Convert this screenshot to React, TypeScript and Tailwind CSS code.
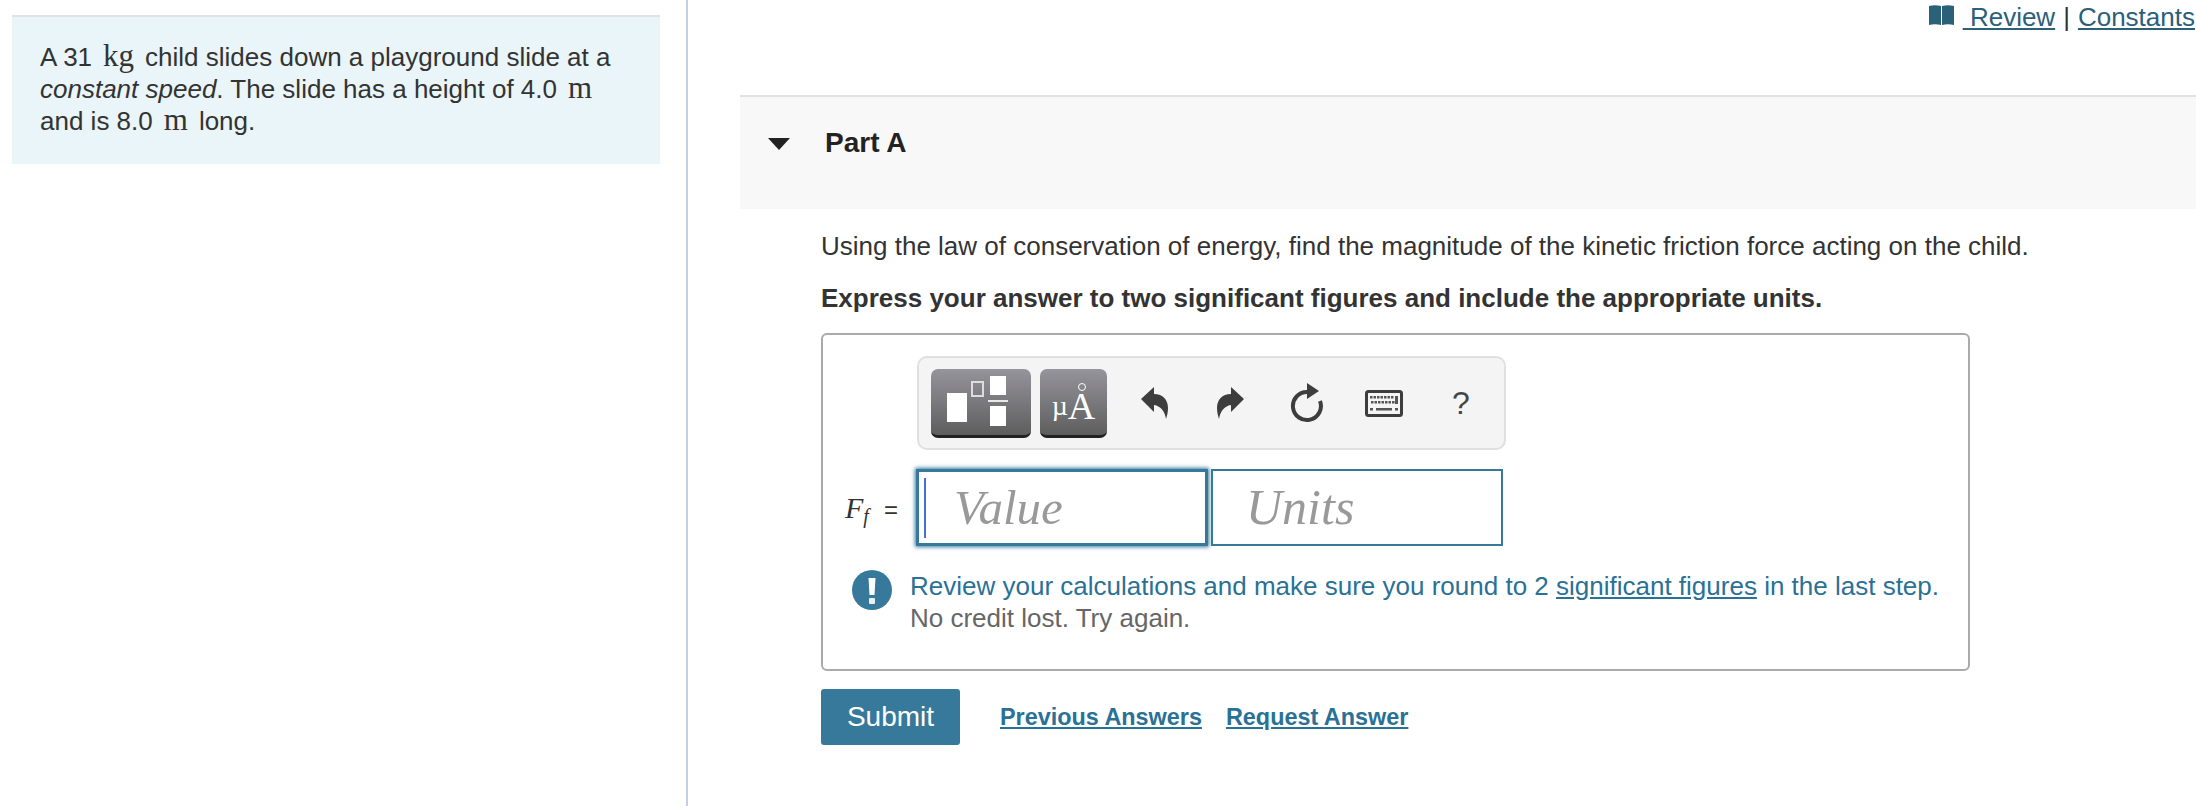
const sans = "font-['Liberation_Sans',Arial,sans-serif]";

function Unit({ children }: { children: string }) {
  return <span className="font-['Liberation_Serif',serif] text-[31px] leading-[28px] mx-[11px]">{children}</span>;
}

function BookIcon() {
  return (
    <svg width="25" height="20" viewBox="0 0 25 20" className="mr-[9px] mb-[4px]">
      <path d="M0 1 C4 0 8 0 12 1 V20 C8 19 4 19 0 20 Z M13 1 C17 0 21 0 25 1 V20 C21 19 17 19 13 20 Z" fill="#2b6079" />
    </svg>
  );
}

function TemplateIcon() {
  return (
    <svg width="72" height="58" viewBox="0 0 72 58">
      <rect x="2" y="19" width="20" height="29" fill="#fff" />
      <rect x="27" y="8" width="11" height="14" fill="none" stroke="#ddd" strokeWidth="2" />
      <rect x="45" y="2" width="16" height="19" fill="#fff" />
      <rect x="43" y="26" width="20" height="2" fill="#e8e8e8" />
      <rect x="45" y="32" width="16" height="20" fill="#fff" />
    </svg>
  );
}

function ArrowIcon({ flip }: { flip?: boolean }) {
  return (
    <svg width="28" height="36" viewBox="0 0 28 36" className={flip ? "-scale-x-100" : ""}>
      <path d="M0 14 L13 2 V9 C22 9 27 15 27 23 C27 27 26 31 25 34 C24 27 20 21 13 20 V27 Z" fill="#3d3d3d" />
    </svg>
  );
}

function ResetIcon() {
  return (
    <svg width="34" height="42" viewBox="0 0 34 42">
      <path d="M17 10 A14 14 0 1 0 30 19" fill="none" stroke="#3d3d3d" strokeWidth="4" />
      <path d="M17 1 L29 9 L17 17 Z" fill="#3d3d3d" />
    </svg>
  );
}

function KeyboardIcon() {
  const dots = [];
  for (let i = 0; i < 7; i++) dots.push(<rect key={"a" + i} x={5 + i * 3.5} y="6" width="2.5" height="2.5" fill="#555" />);
  for (let i = 0; i < 7; i++) dots.push(<rect key={"b" + i} x={6 + i * 3.5} y="11" width="2.5" height="2.5" fill="#555" />);
  return (
    <svg width="38" height="27" viewBox="0 0 38 27">
      <rect x="1.5" y="1.5" width="35" height="24" rx="2" fill="#f4f4f4" stroke="#3d3d3d" strokeWidth="3" />
      {dots}
      <rect x="30" y="6" width="3" height="8" fill="#555" />
      <rect x="5" y="18" width="3" height="2.5" fill="#555" />
      <rect x="11" y="18" width="16" height="2.5" fill="#555" />
      <rect x="30" y="18" width="3" height="2.5" fill="#555" />
    </svg>
  );
}

function AlertIcon() {
  return (
    <svg width="40" height="40" viewBox="0 0 40 40" className="shrink-0">
      <circle cx="20" cy="20" r="20" fill="#37799a" />
      <path d="M16.5 8 H23.5 L22.5 25 H17.5 Z" fill="#fff" />
      <rect x="17" y="28" width="6" height="6" rx="1" fill="#e8f0f4" />
    </svg>
  );
}

export default function App() {
  return (
    <div className={`${sans} flex w-[2196px] h-[806px] bg-white text-[#333] overflow-hidden`}>
      {/* Left: problem intro */}
      <div className="w-[688px] shrink-0 h-full border-r-2 border-[#c3d0e2] pt-[15px] pl-[12px] pr-[26px]">
        <div className="bg-[#e9f5f8] border-t-2 border-[#dfe3e6] h-[149px] pt-[24px] px-[28px] text-[26px] leading-[32px]">
          <p>
            A 31<Unit>kg</Unit>child slides down a playground slide at a
            <br />
            <em>constant speed</em>. The slide has a height of 4.0<Unit>m</Unit>
            <br />
            and is 8.0<Unit>m</Unit>long.
          </p>
        </div>
      </div>

      {/* Right: question part */}
      <div className="flex-1 min-w-0 pl-[52px]">
        <div className="h-[95px] flex justify-end items-start pt-[2px] pr-[1px] text-[26px] leading-[30px]">
          <a className="flex items-center text-[#2b6079] underline">
            <BookIcon />
            <span className="whitespace-pre"> Review</span>
          </a>
          <span className="mx-[8px]">|</span>
          <a className="text-[#2b6079] underline">Constants</a>
        </div>

        <div className="h-[114px] bg-[#f8f8f8] border-t-2 border-[#e2e2e2] flex items-start pt-[30px] pl-[28px]">
          <svg width="22" height="12" viewBox="0 0 22 12" className="mt-[11px]">
            <path d="M0 0h22L11 12z" fill="#222" />
          </svg>
          <span className="ml-[35px] text-[28px] leading-[32px] font-bold text-[#222]">Part A</span>
        </div>

        <div className="pl-[81px] pt-[21px]">
          <p className="text-[26px] leading-[32px]">
            Using the law of conservation of energy, find the magnitude of the kinetic friction force acting on the child.
          </p>
          <p className="mt-[20px] text-[26px] leading-[32px] font-bold">
            Express your answer to two significant figures and include the appropriate units.
          </p>

          <div className="mt-[19px] w-[1149px] h-[338px] border-2 border-[#aaa] rounded-[6px] pl-[94px] pt-[21px]">
            <div className="w-[589px] h-[94px] bg-[#f4f4f4] border-2 border-[#e0e0e0] rounded-[10px] flex items-center pl-[12px]">
              <div className="w-[100px] h-[69px] rounded-[7px] border-b-[3px] border-[#222] bg-gradient-to-b from-[#96949c] to-[#5e5e5e] flex items-center justify-center pt-[2px]">
                <TemplateIcon />
              </div>
              <div className="ml-[9px] w-[67px] h-[69px] rounded-[7px] border-b-[3px] border-[#222] bg-gradient-to-b from-[#96949c] to-[#5e5e5e] flex items-end justify-center pb-[9px] font-['Liberation_Serif',serif] leading-[40px] text-white">
                <span className="text-[28px]">µ</span>
                <span className="relative inline-block text-[38px]">
                  A
                  <span className="absolute -top-[3px] left-1/2 -translate-x-1/2 w-[8px] h-[8px] rounded-full border border-white" />
                </span>
              </div>
              <div className="ml-[34px]"><ArrowIcon /></div>
              <div className="ml-[47px]"><ArrowIcon flip /></div>
              <div className="ml-[46px]"><ResetIcon /></div>
              <div className="ml-[41px]"><KeyboardIcon /></div>
              <span className="ml-[49px] text-[32px] leading-[36px] text-[#444]">?</span>
            </div>

            <div className="flex items-center mt-[19px] -ml-[72px]">
              <div className="w-[71px] flex items-baseline font-['Liberation_Serif',serif] text-[30px]">
                <i>F</i>
                <i className="text-[20px] translate-y-[5px]">f</i>
                <span className={`${sans} text-[24px] ml-[15px]`}>=</span>
              </div>
              <div className="w-[292px] h-[77px] border-[3px] border-[#37799a] shadow-[0_0_4px_1px_#37799a] flex items-center pl-[5px]">
                <div className="w-[2px] h-[60px] bg-[#4a6fd0]" />
                <span className="ml-[28px] font-['Liberation_Serif',serif] italic text-[49px] text-[#999]">Value</span>
              </div>
              <div className="ml-[3px] w-[292px] h-[77px] border-2 border-[#37799a] flex items-center pl-[33px]">
                <span className="font-['Liberation_Serif',serif] italic text-[50px] text-[#999]">Units</span>
              </div>
            </div>

            <div className="flex items-start -ml-[65px] mt-[24px] text-[26px] leading-[32px]">
              <AlertIcon />
              <div className="ml-[18px]">
                <p className="text-[#2a7196]">
                  Review your calculations and make sure you round to 2 <a className="underline">significant figures</a> in the last step.
                </p>
                <p className="text-[#666]">No credit lost. Try again.</p>
              </div>
            </div>
          </div>

          <div className="flex items-center mt-[18px]">
            <button className="w-[139px] h-[56px] bg-[#37799a] rounded-[3px] text-white text-[28px]">Submit</button>
            <a className="ml-[40px] pt-[2px] text-[#2a7196] underline font-bold text-[23.4px]">Previous Answers</a>
            <a className="ml-[24px] pt-[2px] text-[#2a7196] underline font-bold text-[23.4px]">Request Answer</a>
          </div>
        </div>
      </div>
    </div>
  );
}
